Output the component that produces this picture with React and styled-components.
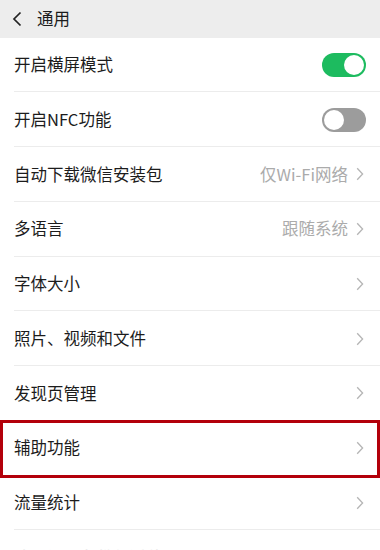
import React from "react";
import styled, { createGlobalStyle } from "styled-components";

const Global = createGlobalStyle`
  html, body { margin: 0; padding: 0; background: #ffffff; }
  body { font-family: "Noto Sans CJK SC", "Noto Sans", sans-serif; -webkit-font-smoothing: antialiased; }
  * { box-sizing: border-box; }
`;

const Page = styled.div`
  width: 380px;
  height: 550px;
  overflow: hidden;
  background: #ffffff;
  display: flex;
  flex-direction: column;
`;

const Header = styled.div`
  height: 37.5px;
  flex: none;
  background: #ededed;
  display: flex;
  align-items: center;
  padding-left: 11px;
  gap: 14px;
`;

const HeaderTitle = styled.span`
  font-size: 16.5px;
  color: #1b1b1b;
  line-height: 1;
  margin-top: -2px;
`;

const List = styled.div`
  display: flex;
  flex-direction: column;
`;

const Row = styled.div`
  position: relative;
  height: 54.75px;
  flex: none;
  display: flex;
  align-items: center;
  padding: 0 14px 0 14px;
  &::after {
    content: "";
    position: absolute;
    left: 14px;
    right: 0;
    bottom: 0;
    height: 1px;
    background: #ececec;
  }
`;

const Label = styled.span`
  flex: 1;
  font-size: 16.5px;
  color: ${(p) => (p.$faded ? "#e4e4e4" : "#1c1c1c")};
  line-height: 1;
  margin-top: -1px;
`;

const Value = styled.span`
  font-size: 16.5px;
  color: #ababab;
  line-height: 1;
  margin-right: 8px;
  margin-top: -1px;
`;

const Toggle = styled.div`
  width: 44px;
  height: 24px;
  border-radius: 12px;
  background: ${(p) => (p.$on ? "#1dbb5f" : "#9c9c9c")};
  display: flex;
  align-items: center;
  justify-content: ${(p) => (p.$on ? "flex-end" : "flex-start")};
  padding: 2px;
`;

const Knob = styled.div`
  width: 20px;
  height: 20px;
  border-radius: 50%;
  background: #ffffff;
`;

const Highlight = styled.div`
  position: absolute;
  left: 0;
  right: 0;
  top: -1px;
  bottom: -2px;
  border: 3px solid #b3000a;
  pointer-events: none;
  z-index: 2;
`;

const Chevron = ({ color = "#b5b5b5" }) => (
  <svg width="8" height="14" viewBox="0 0 8 14" style={{ flex: "none", marginRight: 2 }}>
    <path d="M1.2 1.2 L6.6 7 L1.2 12.8" fill="none" stroke={color} strokeWidth="1.3" />
  </svg>
);

const BackIcon = () => (
  <svg width="12" height="16" viewBox="0 0 12 16">
    <path d="M9.5 1.5 L3 8 L9.5 14.5" fill="none" stroke="#222" strokeWidth="1.7" />
  </svg>
);

const rows = [
  { label: "开启横屏模式", toggle: true },
  { label: "开启NFC功能", toggle: false },
  { label: "自动下载微信安装包", value: "仅Wi-Fi网络" },
  { label: "多语言", value: "跟随系统" },
  { label: "字体大小" },
  { label: "照片、视频和文件" },
  { label: "发现页管理" },
  { label: "辅助功能", highlight: true },
  { label: "流量统计" },
  { label: "聊天记录备份与迁移", faded: true },
];

export default function App() {
  return (
    <>
      <Global />
      <Page>
        <Header>
          <BackIcon />
          <HeaderTitle>通用</HeaderTitle>
        </Header>
        <List>
          {rows.map((r) => (
            <Row key={r.label}>
              <Label $faded={r.faded}>{r.label}</Label>
              {r.toggle !== undefined ? (
                <Toggle $on={r.toggle}>
                  <Knob />
                </Toggle>
              ) : r.faded ? null : (
                <>
                  {r.value && <Value>{r.value}</Value>}
                  <Chevron />
                </>
              )}
              {r.highlight && <Highlight />}
            </Row>
          ))}
        </List>
      </Page>
    </>
  );
}
